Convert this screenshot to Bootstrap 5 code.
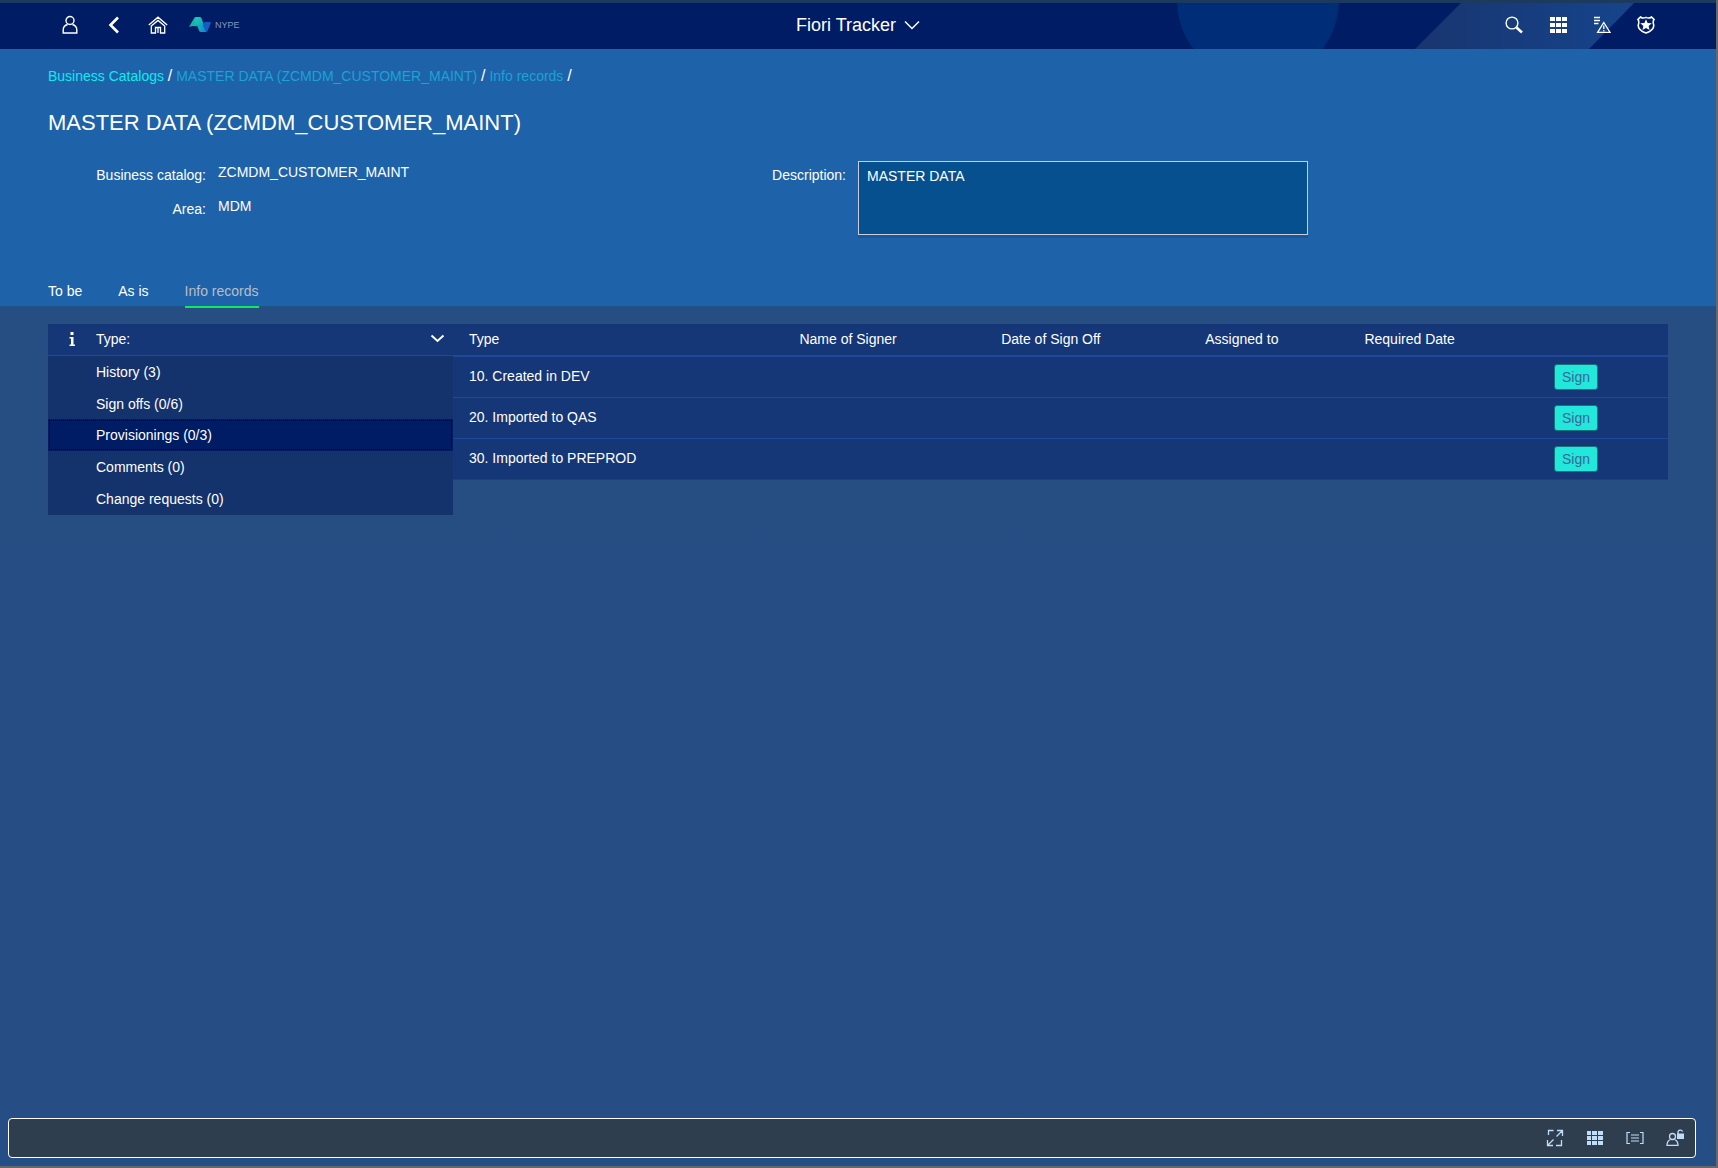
<!DOCTYPE html>
<html lang="en">
<head>
<meta charset="utf-8">
<meta name="viewport" content="width=device-width, initial-scale=1">
<title>Fiori Tracker</title>
<link href="https://cdn.jsdelivr.net/npm/bootstrap@5.3.0/dist/css/bootstrap.min.css" rel="stylesheet">
<style>
  body { font-family: "Liberation Sans", Arial, sans-serif; font-size: 14px; line-height: 20px; color: #fff;
    background: linear-gradient(#264e82, #264e86); border: solid #67676b; border-width: 0 2px 2px 0; }
  svg { display: block; fill: none; stroke: currentColor; }
  svg.solid-art { stroke: none; }
  button { font: inherit; color: inherit; }
  .shell-bar { height: 49px; background: #001c64; border-top: 3px solid #1b3a5e; padding-bottom: 2px; overflow: hidden; }
  .shell-art { inset: 0; width: 100%; height: 100%; }
  .shell-side { flex: 1 1 0; padding: 0 60px; }
  .shell-icons { gap: 24px; }
  .brand { margin-left: 21px; }
  .icon-btn { width: 20px; height: 20px; padding: 0; border: 0; background: none; display: flex; align-items: center; justify-content: center; }
  .shell-title { font-size: 18px; line-height: 24px; background: none; border: 0; padding: 0; }
  .logo-text { font-size: 9px; line-height: 10px; color: #8796be; }
  .object-head { background: #1e62aa; padding: 16px 48px 0; border-bottom: 1px solid #1f5589; }
  .crumbs { line-height: 22px; }
  .crumbs a { color: #1ba3d3; text-decoration: none; }
  .crumbs a.crumb-root { color: #10e9ee; }
  .crumbs span { font-size: 16px; }
  .object-title { font-size: 22px; line-height: 28px; margin: 22px 0 24px; }
  .object-form { display: grid; column-gap: 12px; height: 106px;
    grid-template-columns: 158fr 459fr 157fr 450fr 348fr; grid-template-rows: 34px 34px; }
  .object-form label, .object-form .form-name { text-align: right; padding-top: 4px; }
  .form-text-value { padding-top: 1px; }
  .object-form textarea { grid-row: 1 / 3; grid-column: 4; height: 74px; background: #07508f; color: #fff; font-size: 14px; line-height: 20px;
    border: 1px solid #ccd; border-radius: 0; padding: 4px 8px; resize: none; box-shadow: 0 3px 0 #17589b; }
  .view-tabs { gap: 36px; height: 39px; }
  .view-tabs a { color: #fff; text-decoration: none; padding-top: 14px; height: 41px; }
  .view-tabs a.active { color: #b9bec6; border-bottom: 2px solid #0fe85f; z-index: 1; }
  .records { padding: 17px 48px 0; }
  .type-panel { flex: 405 1 0; }
  .records-panel { flex: 1215 1 0; }
  .type-head { height: 32px; background: #153677; border: 0; border-bottom: 1px solid #20489a; padding: 0 8px 2px 18px; }
  .type-name { padding-left: 18px; }
  .type-list .list-group-item { background: #14326b; color: #fff; border: 0; padding: 6px 48px; line-height: 20px; }
  .type-list .list-group-item.active { background: #001c64; outline: 1px dotted #000; outline-offset: -2px; }
  .records-table { background: #153677; table-layout: fixed; border-bottom: 1px solid #1f4173; }
  .records-table th, .records-table td { padding: 0 16px 2px; font-weight: 400; }
  .records-table th { height: 32px; border-bottom: 2px solid #20489a; }
  .records-table td { height: 41px; border-bottom: 1px solid #20489a; }
  .records-table td:last-child { padding-bottom: 0; }
  .records-table tr:last-child td { border-bottom: 0; }
  .sign-btn { height: 26px; width: 44px; background: #21e8da; color: #3a6799; border: 1px solid #17737d; border-radius: 3px; padding: 0; display: block; }
  .foot-bar { margin: 0 20px 8px 8px; height: 40px; background: #2f3e4e; border: 1px solid #fff; border-radius: 4px; color: #bfdcf8; gap: 20px; padding-right: 10px; }
</style>
<script src="https://cdn.jsdelivr.net/npm/bootstrap@5.3.0/dist/js/bootstrap.bundle.min.js"></script>
</head>
<body class="d-flex flex-column min-vh-100">

<header class="shell-bar position-relative d-flex align-items-center flex-shrink-0">
  <svg class="shell-art solid-art position-absolute" viewBox="0 0 1716 46" preserveAspectRatio="xMidYMin slice" aria-hidden="true">
    <defs><linearGradient id="band"><stop offset="0" stop-color="#18356f"/><stop offset="1" stop-color="#16448c"/></linearGradient></defs>
    <circle cx="1258" cy="-3" r="81" fill="#002d77"/>
    <path d="M1461 0H1634L1589 46H1415Z" fill="url(#band)"/>
  </svg>
  <div class="shell-side position-relative d-flex align-items-center">
    <div class="shell-icons d-flex">
      <button class="icon-btn" type="button" aria-label="User"><svg width="16" height="20" viewBox="0 0 16 20" stroke-width="1.4"><circle cx="8" cy="5.500" r="4"/><path d="M5.600 9.500C2.500 10.300 1.200 12.500 1.200 15v3h13.600v-3c0-2.500-1.300-4.700-4.400-5.500"/></svg></button>
      <button class="icon-btn" type="button" aria-label="Back"><svg width="12" height="18" viewBox="0 0 12 18" stroke-width="2.600"><path d="M10 1.500 2.500 9l7.500 7.500"/></svg></button>
      <button class="icon-btn" type="button" aria-label="Home"><svg width="20" height="18" viewBox="0 0 20 18" stroke-width="1.300"><path d="M.8 9 10 1.200 19.200 9M3 10.200l7-5.800 7 5.800M3.300 10v7h4.200v-5.500h5V17h4.200v-7M10 11.500V17"/></svg></button>
    </div>
    <a href="#" class="brand d-flex align-items-center text-decoration-none" aria-label="NYPE">
      <svg class="solid-art" width="22" height="16" viewBox="0 0 22 16"><defs><linearGradient id="teal" x1="0" y1="0" x2="1" y2="1"><stop offset="0" stop-color="#18d3ad"/><stop offset="1" stop-color="#1683d4"/></linearGradient></defs>
        <path d="M5.500.500Q6 0 7 0h4L7.500 9.500Q4 8.500 0 10Z" fill="#16b7a8"/><path d="M7 0h3.500q1.500 0 2 1.300L17.500 15H12q-1.500 0-2-1.500L6 3Z" fill="url(#teal)"/><path d="M15 5.500Q18 4 22 5.500L18.500 14q-.500 1-1.500 1l-3.200-6.500Z" fill="#0f5fc4"/></svg>
      <span class="logo-text ms-1">NYPE</span>
    </a>
  </div>
  <button class="shell-title position-relative d-flex align-items-center" type="button">Fiori Tracker
    <svg class="ms-2" width="16" height="10" viewBox="0 0 16 10" stroke-width="1.500"><path d="m1 1.500 7 7 7-7"/></svg></button>
  <nav class="shell-side position-relative d-flex justify-content-end" aria-label="Tools">
    <div class="shell-icons d-flex">
      <button class="icon-btn" type="button" aria-label="Search"><svg width="18" height="18" viewBox="0 0 18 18" stroke-width="1.400"><circle cx="7" cy="7" r="5.900"/><path d="m11.500 11.500 5.500 5" stroke-width="2.500"/></svg></button>
      <button class="icon-btn" type="button" aria-label="Apps"><svg class="solid-art" width="18" height="16" viewBox="0 0 18 16" shape-rendering="crispEdges"><path fill="currentColor" d="M1 0h5v4H1zM7 0h5v4H7zM13 0h5v4h-5zM1 6h5v4H1zM7 6h5v4H7zM13 6h5v4h-5zM1 12h5v4H1zM7 12h5v4H7zM13 12h5v4h-5z"/></svg></button>
      <button class="icon-btn" type="button" aria-label="Alerts"><svg width="18" height="18" viewBox="0 0 18 18" stroke-width="1.300"><path d="M1 1.500h6M1 4.500h6M1 7.500h4.500M10.800 6.500 17 16.400H4.600ZM10.800 9.500v3.600M10.800 14v1.300"/></svg></button>
      <button class="icon-btn" type="button" aria-label="Badge"><svg width="18" height="18" viewBox="0 0 18 18" stroke-width="1.600"><path d="M3.500 1c1.800 1.300 3.600 1.300 5.500.4 1.900.9 3.700.9 5.500-.4L17 3.500c-1.600 2.300-.6 3.700-.3 5.500.5 4-3.200 6.300-7.700 8-4.500-1.700-8.200-4-7.700-8C1.600 7.200 2.600 5.800 1 3.500Z"/><path fill="currentColor" stroke="none" d="m9 3.200 1.600 3.800 4.200.3-3.200 2.700 1 4.100L9 12l-3.600 2.100 1-4.100-3.200-2.700 4.200-.3Z"/></svg></button>
    </div>
  </nav>
</header>

<section class="object-head flex-shrink-0">
  <nav class="crumbs" aria-label="Breadcrumb"><a class="crumb-root" href="#">Business Catalogs</a> <span>/</span> <a href="#">MASTER DATA (ZCMDM_CUSTOMER_MAINT)</a> <span>/</span> <a href="#">Info records</a> <span>/</span></nav>
  <h1 class="object-title fw-normal">MASTER DATA (ZCMDM_CUSTOMER_MAINT)</h1>
  <div class="object-form">
    <span class="form-name">Business catalog:</span><span class="form-text-value">ZCMDM_CUSTOMER_MAINT</span>
    <label for="description">Description:</label><textarea id="description" readonly>MASTER DATA</textarea><span></span>
    <span class="form-name">Area:</span><span class="form-text-value">MDM</span>
  </div>
  <nav class="view-tabs d-flex">
    <a href="#">To be</a><a href="#">As is</a><a href="#" class="active" aria-current="page">Info records</a>
  </nav>
</section>

<main class="records d-flex align-items-start flex-grow-1">
  <div class="type-panel">
    <button class="type-head w-100 d-flex align-items-center" type="button" aria-expanded="true">
      <svg class="solid-art" width="12" height="16" viewBox="0 0 12 16"><path fill="currentColor" d="M4.500 1h3v3h-3zM3.500 6h4v7.500H9V15H3.500v-1.500H5v-6H3.500z"/></svg>
      <span class="type-name me-auto">Type:</span>
      <svg width="15" height="9" viewBox="0 0 15 9" stroke-width="2"><path d="m1.500 1.500 6 5.500 6-5.500"/></svg>
    </button>
    <div class="type-list list-group list-group-flush">
      <button type="button" class="list-group-item list-group-item-action">History (3)</button>
      <button type="button" class="list-group-item list-group-item-action">Sign offs (0/6)</button>
      <button type="button" class="list-group-item list-group-item-action active">Provisionings (0/3)</button>
      <button type="button" class="list-group-item list-group-item-action">Comments (0)</button>
      <button type="button" class="list-group-item list-group-item-action">Change requests (0)</button>
    </div>
  </div>
  <div class="records-panel">
    <table class="records-table w-100">
      <colgroup><col style="width:27.2%"><col style="width:16.6%"><col style="width:16.8%"><col style="width:13.1%"><col style="width:15.6%"><col></colgroup>
      <thead><tr><th>Type</th><th>Name of Signer</th><th>Date of Sign Off</th><th>Assigned to</th><th>Required Date</th><th aria-label="Action"></th></tr></thead>
      <tbody>
        <tr><td>10. Created in DEV</td><td></td><td></td><td></td><td></td><td><button class="sign-btn" type="button">Sign</button></td></tr>
        <tr><td>20. Imported to QAS</td><td></td><td></td><td></td><td></td><td><button class="sign-btn" type="button">Sign</button></td></tr>
        <tr><td>30. Imported to PREPROD</td><td></td><td></td><td></td><td></td><td><button class="sign-btn" type="button">Sign</button></td></tr>
      </tbody>
    </table>
  </div>
</main>

<footer class="foot-bar d-flex align-items-center justify-content-end flex-shrink-0">
  <button class="icon-btn" type="button" aria-label="Full screen"><svg width="18" height="18" viewBox="0 0 18 18" stroke-width="1.300"><path d="M7.500 1.500H2.500V6M15.500 11v5.500H10M11 1.500h5.500V7M16.500 1.500 10.500 7.500M1.500 11v5.500H7M1.500 16.500 7.500 10.500"/></svg></button>
  <button class="icon-btn" type="button" aria-label="Grid"><svg class="solid-art" width="16" height="14" viewBox="0 0 16 14" shape-rendering="crispEdges"><path fill="currentColor" d="M0 0h4v4H0zM5 0h5v4H5zM11 0h5v4h-5zM0 5h4v4H0zM5 5h5v4H5zM11 5h5v4h-5zM0 10h4v4H0zM5 10h5v4H5zM11 10h5v4h-5z"/></svg></button>
  <button class="icon-btn" type="button" aria-label="List"><svg width="18" height="14" viewBox="0 0 18 14" stroke-width="1.200"><path d="M4 1.500H1v11h3M14 1.500h3v11h-3M5 4h8M5 7h8M5 10h8"/></svg></button>
  <button class="icon-btn" type="button" aria-label="User unlock"><svg width="18" height="18" viewBox="0 0 18 18" stroke-width="1.300"><circle cx="6.500" cy="7.500" r="3"/><path d="M4.500 10.500C2.200 11.400 1 13 1 16.300h11c0-3.300-1.200-4.900-3.500-5.800M12 5V3.500c0-3 4-3 4.500-.8"/><path fill="currentColor" stroke="none" d="M11 4.500h7V10h-7z"/></svg></button>
</footer>
</body>
</html>
